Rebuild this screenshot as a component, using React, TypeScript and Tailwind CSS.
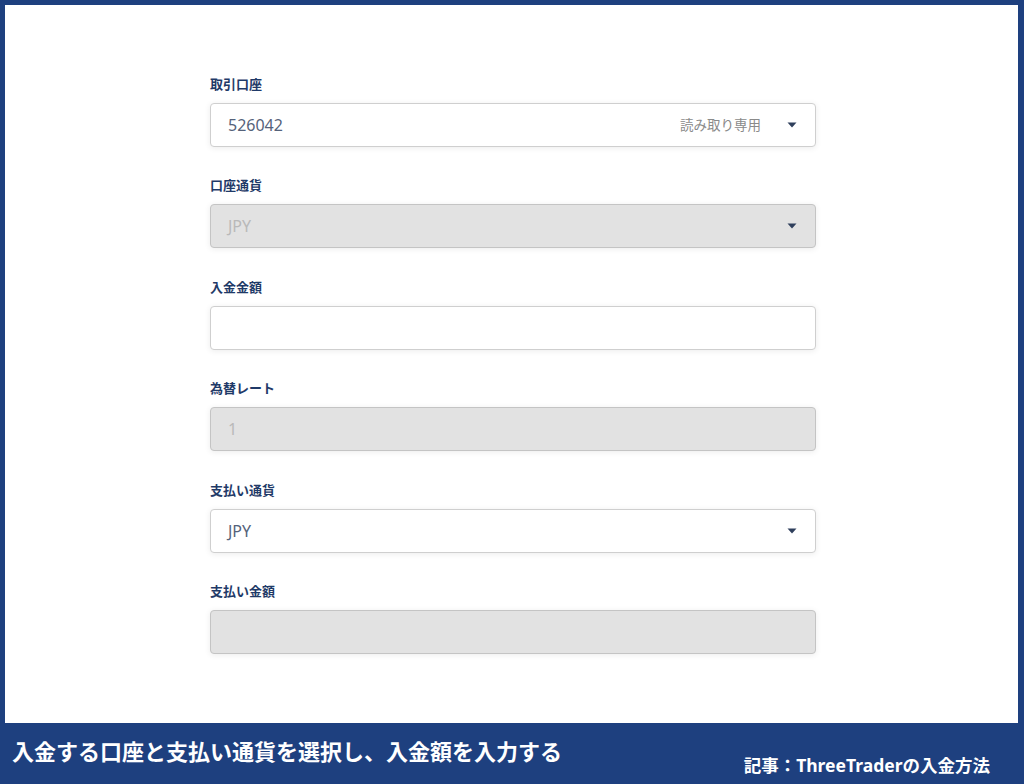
import type { ReactNode } from 'react';

type FieldProps = {
    label: string;
    children?: ReactNode;
    disabled?: boolean;
    select?: boolean;
};

function Caret() {
    return (
        <svg width="10" height="6" viewBox="0 0 10 6" className="shrink-0">
            <path d="M0.5 0.5 L9.5 0.5 L5 5.5 Z" fill="#2f3f5c" />
        </svg>
    );
}

function Field({ label, children, disabled, select }: FieldProps) {
    return (
        <div className="mb-[29.4px]">
            <div className="h-[18px] text-[13px] leading-[18px] font-bold text-[#1f3a68]">
                {label}
            </div>
            <div
                className={
                    disabled
                        ? 'mt-[10px] h-[44px] rounded-[4px] border border-[#c4c4c4] bg-[#e2e2e2] shadow-[0_1px_6px_rgba(0,0,0,0.08)] flex items-center pl-[17px] pr-[18px]'
                        : 'mt-[10px] h-[44px] rounded-[4px] border border-[#cfcfcf] bg-white shadow-[0_1px_6px_rgba(0,0,0,0.08)] flex items-center pl-[17px] pr-[18px]'
                }
            >
                <div className="flex-1 flex items-center">{children}</div>
                {select && <Caret />}
            </div>
        </div>
    );
}

export default function App() {
    return (
        <div
            className="w-[1024px] h-[784px] bg-[#1e407f] flex flex-col pt-[5px]"
            style={{ fontFamily: '"Noto Sans", "Noto Sans CJK JP", sans-serif' }}
        >
            <div className="flex-1 ml-[5px] mr-[6px] bg-white pt-[70px]">
                <div className="ml-[205px] w-[606px]">
                    <Field label="取引口座" select>
                        <span className="flex-1 text-[16px] text-[#55627a]">526042</span>
                        <span className="mr-[26px] text-[13.5px] text-[#8a8a8a]">読み取り専用</span>
                    </Field>
                    <Field label="口座通貨" select disabled>
                        <span className="text-[16px] text-[#b9b9b9]">JPY</span>
                    </Field>
                    <Field label="入金金額" />
                    <Field label="為替レート" disabled>
                        <span className="text-[16px] text-[#b9b9b9]">1</span>
                    </Field>
                    <Field label="支払い通貨" select>
                        <span className="text-[16px] text-[#55627a]">JPY</span>
                    </Field>
                    <Field label="支払い金額" disabled />
                </div>
            </div>
            <div className="h-[61px] flex items-center justify-between pl-[12px] pr-[34px] text-white font-bold">
                <span className="text-[22px] mb-[4px]">入金する口座と支払い通貨を選択し、入金額を入力する</span>
                <span className="text-[17.5px] mt-[24px]">記事：ThreeTraderの入金方法</span>
            </div>
        </div>
    );
}
